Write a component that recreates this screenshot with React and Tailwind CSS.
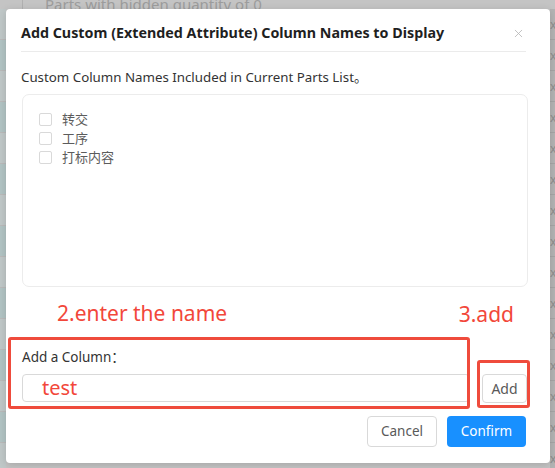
import { X } from "lucide-react"

const font = { fontFamily: '"Noto Sans", "Noto Sans CJK SC", sans-serif' }

const columns = ["转交", "工序", "打标内容"]

function BackPage() {
    const rows = Array.from({ length: 15 })
    return (
        <div className="absolute inset-0 bg-[#c4c4c4]">
            <div className="relative h-[9px]">
                <span className="absolute left-[22px] top-0 w-px h-[9px] bg-[#b0b0b0]"></span>
                <span className="absolute left-[45px] -top-[6px] text-[15px] leading-[20px] text-[#9c9c9c] whitespace-nowrap">Parts with hidden quantity of 0</span>
            </div>
            <div className="flex">
                <div className="w-[6px] flex flex-col">
                    {rows.map((_, i) => (
                        <div key={i} className={`h-[31px] border-b border-[#bababa] ${i % 2 ? "bg-[#b2c4c4]" : "bg-[#c0c8c8]"}`}></div>
                    ))}
                </div>
                <div className="flex-1"></div>
                <div className="w-[5px] flex flex-col bg-[#b4b4b4]">
                    {rows.map((_, i) => (
                        <div key={i} className="h-[31px] border-b border-[#a6a6a6] text-[12px] leading-[31px] text-[#8e8e8e] overflow-hidden">x</div>
                    ))}
                </div>
            </div>
        </div>
    )
}

export default function App() {
    return (
        <div className="relative w-[555px] h-[468px] overflow-hidden" style={font}>
            <BackPage />
            <div className="absolute left-[6px] top-[9px] w-[544px] h-[454px] bg-white rounded-[4px] shadow-[0_2px_8px_rgba(0,0,0,0.15)] pl-[16px] pr-[22px] pt-[14px] flex flex-col">
                <div className="flex items-center justify-between -ml-[1px]">
                    <h2 className="text-[14.3px] leading-[20px] font-bold text-[#1f1f1f]">Add Custom (Extended Attribute) Column Names to Display</h2>
                    <X className="w-[13px] h-[13px] text-[#b5b5b5] mr-[3px]" strokeWidth={1.5} />
                </div>
                <div className="mt-[8px] h-px bg-[#ebebeb] -ml-[1px] mr-[2px]"></div>
                <p className="mt-[15px] text-[13.3px] leading-[20px] text-[#333] -ml-[1px]">Custom Column Names Included in Current Parts List。</p>
                <div className="mt-[7px] h-[193px] border border-[#ececec] rounded-[7px] px-[16px] pt-[15px] flex flex-col">
                    {columns.map(c => (
                        <label key={c} className="flex items-center gap-[10px] h-[19px]">
                            <span className="w-[13px] h-[13px] border border-[#d9d9d9] rounded-[2px] bg-white"></span>
                            <span className="text-[13px] text-[#5c5c5c]">{c}</span>
                        </label>
                    ))}
                </div>
                <div className="mt-[13px] flex justify-between text-[#f2473a] text-[21px] leading-[26px]">
                    <span className="ml-[35px]">2.enter the name</span>
                    <span className="mt-[1px] mr-[14px]">3.add</span>
                </div>
                <p className="mt-[20px] text-[13.5px] leading-[20px] text-[#333]">Add a Column：</p>
                <div className="mt-[7px] flex items-start gap-[12px]">
                    <div className="flex-1 h-[28px] border border-[#d9d9d9] rounded-[4px] pl-[19px] text-[20px] leading-[26px] text-[#f2473a]">test</div>
                    <button className="w-[45px] h-[29px] border border-[#d9d9d9] rounded-[4px] text-[14px] text-[#595959] mr-[1px]">Add</button>
                </div>
                <div className="mt-[13px] flex justify-end gap-[10px] mr-[2px]">
                    <button className="w-[70px] h-[31px] border border-[#d9d9d9] rounded-[4px] text-[13.5px] text-[#595959]">Cancel</button>
                    <button className="w-[79px] h-[31px] bg-[#1890ff] rounded-[4px] text-[13.5px] text-white">Confirm</button>
                </div>
                <div className="absolute left-[2px] top-[328px] w-[462px] h-[72px] border-[3px] border-[#ef4b3c] rounded-[3px]"></div>
                <div className="absolute left-[471px] top-[351px] w-[53px] h-[48px] border-[3px] border-[#ef4b3c] rounded-[3px]"></div>
            </div>
        </div>
    )
}
